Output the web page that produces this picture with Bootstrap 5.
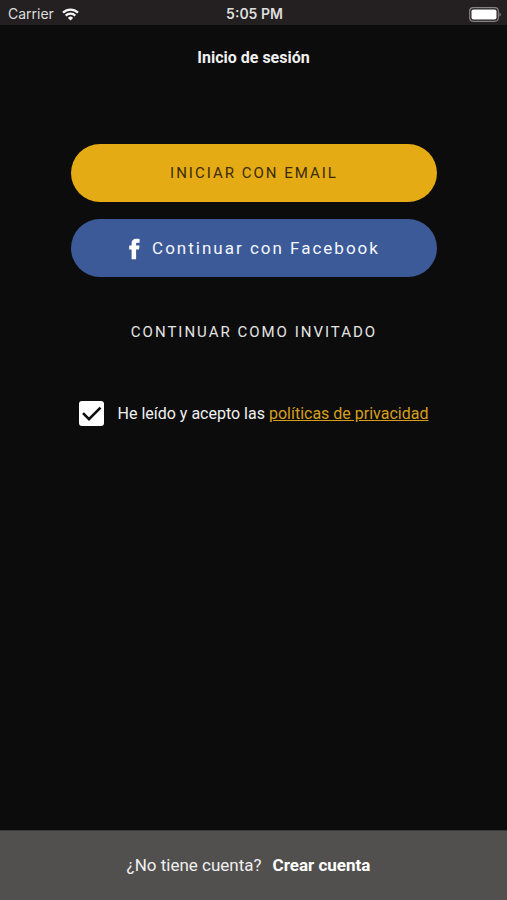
<!DOCTYPE html>
<html lang="es">
<head>
<meta charset="utf-8">
<meta name="viewport" content="width=device-width, initial-scale=1">
<title>Inicio de sesión</title>
<link rel="stylesheet" href="https://cdn.jsdelivr.net/npm/bootstrap@5.3.0/dist/css/bootstrap.min.css">
<style>
  body { background: #0c0c0c; color: #f0f0f0; font-family: Roboto, sans-serif; font-size: 16px; line-height: 24px; }
  .status-bar { display: grid; grid-template-columns: 1fr auto 1fr; height: 25px; padding: 2px 6px 0 8px; background: #242021; color: #dedede; font-family: Inter, sans-serif; font-size: 14px; }
  .clock { font-weight: 600; }
  .screen-title { font-size: 16px; line-height: 24px; font-weight: 700; padding-top: 21px; }
  .actions { padding: 74px 70px 0 71px; }
  .btn-tall { height: 58px; border: 0; font-size: 15px; letter-spacing: 2px; }
  .btn-email, .btn-email:hover { background: #e4ab14; color: #3a2b08; }
  .btn-facebook, .btn-facebook:hover { background: #3d5a98; color: #f4f7ff; font-size: 17px; margin-top: 17px; }
  .btn-facebook { padding-top: 8px; }
  .btn-guest, .btn-guest:hover { color: #e4e4e4; margin-top: 26px; }
  .consent { padding-top: 40px; gap: 14px; }
  .form-check-input.agree { width: 25px; height: 25px; margin: 0; border: 0; border-radius: 3px; }
  .form-check-input.agree:checked { background-color: #fff; background-size: 25px 25px;
    background-image: url("data:image/svg+xml,%3csvg xmlns='http://www.w3.org/2000/svg' viewBox='0 0 25 25'%3e%3cpath fill='none' stroke='%230c0c0c' stroke-width='2.6' d='M4 12.2l6 6L21.500 6.700'/%3e%3c/svg%3e"); }
  .policy, .policy:hover { color: #d59f1c; }
  .signup-bar { height: 70px; gap: 11px; padding: 0 10px 2px 0; background: #524f4f; border-top: 1px solid #3a3838; font-size: 17px; }
  .signup-bar a { color: #fff; }
</style>
<script defer src="https://cdn.jsdelivr.net/npm/bootstrap@5.3.0/dist/js/bootstrap.bundle.min.js"></script>
</head>
<body class="d-flex flex-column min-vh-100">
  <div class="status-bar align-items-center">
    <div class="d-flex align-items-center gap-2">
      <span>Carrier</span>
      <svg width="17" height="13" viewBox="0 0 17 13" fill="none" stroke="#f4f4f4" stroke-width="2.300" aria-hidden="true">
        <path d="M1 4.700a10.800 10.800 0 0 1 15 0M3.700 7.600a7 7 0 0 1 9.600 0"/>
        <path d="M8.500 12.500L5.900 9.900a3.700 3.700 0 0 1 5.200 0z" fill="#f4f4f4" stroke="none"/>
      </svg>
    </div>
    <span class="clock">5:05 PM</span>
    <svg class="ms-auto" width="32" height="15" viewBox="0 0 32 15" aria-hidden="true">
      <rect x="0.700" y="0.700" width="28.600" height="13.600" rx="3.500" fill="none" stroke="#858384" stroke-width="1.200"/>
      <rect x="2.500" y="2.500" width="25" height="10" rx="1.800" fill="#fff"/>
      <path d="M30.500 5.200q1.300.8 1.300 2.300t-1.300 2.300z" fill="#858384"/>
    </svg>
  </div>

  <h1 class="screen-title text-center m-0">Inicio de sesión</h1>

  <main class="flex-grow-1">
    <div class="actions d-grid">
      <button type="button" class="btn btn-tall btn-email rounded-pill">INICIAR CON EMAIL</button>
      <button type="button" class="btn btn-tall btn-facebook rounded-pill d-flex align-items-center justify-content-center">
        <svg class="me-2" width="16" height="22" viewBox="0 0 16 22" fill="#fff" aria-hidden="true">
          <path d="M3.600 21.300V11.600H1.200V7.600h2.400V5.400C3.600 2.300 5.300.8 8.400.8c1.200 0 2.500.1 3.200.3v3.600H9.700c-1.200 0-1.600.5-1.600 1.400v1.500h3.400l-.5 4H8.100v9.700z"/>
        </svg>
        Continuar con Facebook
      </button>
      <button type="button" class="btn btn-tall btn-guest">CONTINUAR COMO INVITADO</button>
    </div>
    <div class="consent d-flex align-items-center justify-content-center">
      <input class="form-check-input agree flex-shrink-0" type="checkbox" id="agree" checked>
      <label for="agree">He leído y acepto las <a class="policy" href="#privacidad">políticas de privacidad</a></label>
    </div>
  </main>

  <footer class="signup-bar d-flex align-items-center justify-content-center">
    <span>¿No tiene cuenta?</span>
    <a class="fw-bold text-decoration-none" href="#registro">Crear cuenta</a>
  </footer>
</body>
</html>
